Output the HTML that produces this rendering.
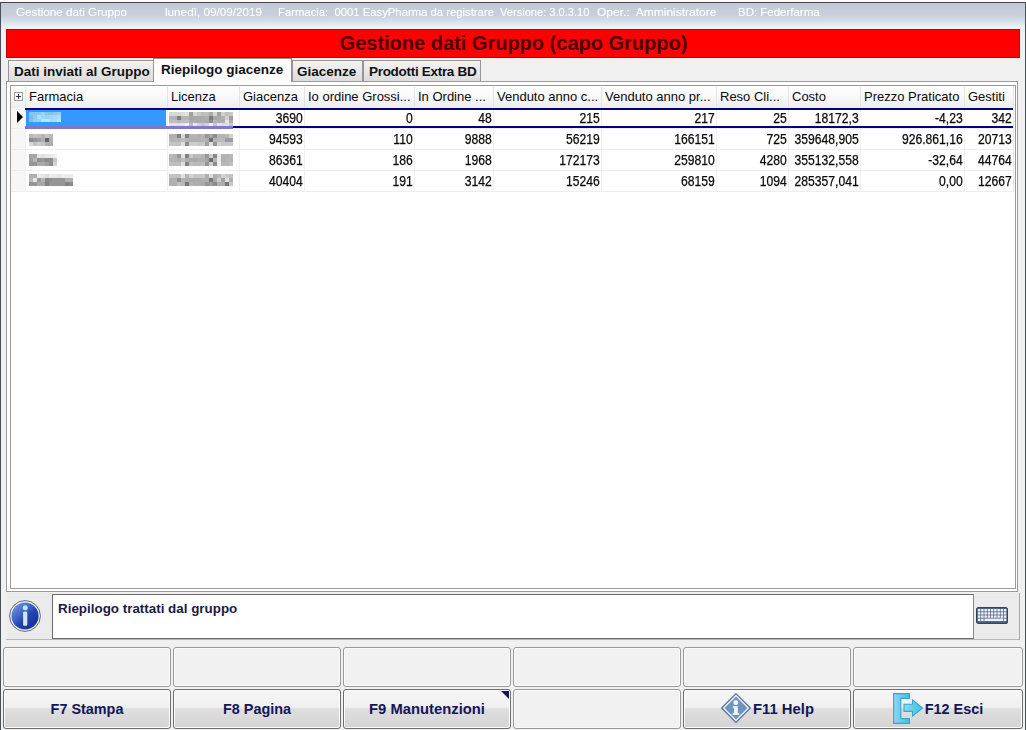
<!DOCTYPE html>
<html><head><meta charset="utf-8">
<style>
*{margin:0;padding:0;box-sizing:border-box}
html,body{width:1026px;height:730px;overflow:hidden;background:#f0f0f0;font-family:"Liberation Sans",sans-serif}
.a{position:absolute}
#win{position:absolute;left:0;top:0;width:1026px;height:730px;background:#f0f0f0}
#title{left:1px;top:3px;width:1024px;height:26px;background:linear-gradient(#c3cad6 0px,#c6cfdb 12px,#d2dbe7 17px,#dfe8ec 21px,#f1f0f3 24px,#fbe9ec 26px)}
.tt{position:absolute;top:5.6px;color:#fcfdff;font-size:11.5px;white-space:nowrap;transform-origin:0 0;text-shadow:0 0 1px rgba(255,255,255,.6)}
#banner{left:6px;top:29px;width:1014px;height:29px;background:#fe0000;border:1px solid #c80000}
#banner span{position:absolute;left:332.6px;top:1.6px;font-weight:bold;font-size:20px;color:#4a0000;white-space:nowrap}
.tab{position:absolute;height:21px;border:1px solid #959595;border-bottom:none;background:linear-gradient(#f3f3f3,#dcdcdc);font-weight:bold;font-size:13.5px;color:#111;white-space:nowrap;padding-left:5px;line-height:22px}
.hc{position:absolute;top:86.4px;height:22px;line-height:22px;font-size:13px;color:#0a0a0a;padding-left:4px;white-space:nowrap}
.hs{position:absolute;top:87px;width:1px;height:20px;background:#e4e4e4}
.dc{position:absolute;height:21px;line-height:21px;font-size:13.8px;color:#050505;text-align:right;padding-right:1.5px;white-space:nowrap;-webkit-text-stroke:0.25px #111;transform:scaleX(0.88);transform-origin:100% 50%}
.btn{position:absolute;width:168px;height:40px;border:1px solid #999;border-radius:3px;background:#f1f1f1;box-shadow:inset 1px 1px 0 #fbfbfb,inset -1px -1px 0 #fbfbfb}
.be{border-color:#6f6f6f;background:linear-gradient(#f6f6f6 0%,#f0f0f0 45%,#dedede 50%,#d4d4d4 100%)}
.bt{position:absolute;left:0;top:0;width:100%;height:100%;line-height:39px;text-align:center;font-weight:bold;font-size:14.4px;color:#15155a;white-space:nowrap}
</style></head><body>
<div id="win">
<div class="a" style="left:0;top:0;width:1026px;height:2px;background:#fbfbfb"></div>
<div class="a" style="left:0;top:2px;width:1026px;height:1px;background:#3f464d"></div>
<div id="title" class="a"></div>
<div class="tt" style="left:16px;transform:scaleX(1.016)">Gestione dati Gruppo</div>
<div class="tt" style="left:165px;transform:scaleX(1.018)">lunedì, 09/09/2019</div>
<div class="tt" style="left:278px;transform:scaleX(0.982)">Farmacia:&nbsp; 0001 EasyPharma da registrare</div>
<div class="tt" style="left:500px;transform:scaleX(0.965)">Versione: 3.0.3.10</div>
<div class="tt" style="left:597px;transform:scaleX(1.044)">Oper.:&nbsp; Amministratore</div>
<div class="tt" style="left:738px;transform:scaleX(0.998)">BD: Federfarma</div>
<div class="a" style="left:0;top:2px;width:1px;height:728px;background:#4a5058"></div>
<div class="a" style="left:1025px;top:2px;width:1px;height:728px;background:#4a5058"></div>
<div id="banner" class="a"><span>Gestione dati Gruppo (capo Gruppo)</span></div>

<div class="a" style="left:6px;top:81px;width:1012px;height:511px;border:1px solid #9a9a9a;background:#fff"></div>
<div class="tab" style="left:8px;top:60px;width:146px">Dati inviati al Gruppo</div>
<div class="tab" style="left:153px;top:58px;width:139px;height:24px;background:#fcfcfc;padding-left:7px;line-height:21.5px">Riepilogo giacenze</div>
<div class="tab" style="left:292px;top:60px;width:71px;padding-left:4px">Giacenze</div>
<div class="tab" style="left:363px;top:60px;width:118px;letter-spacing:-0.3px">Prodotti Extra BD</div>
<div class="a" style="left:10px;top:85px;width:1006px;height:504px;border:1px solid #9a9a9a;background:#fff"></div>
<div class="a" style="left:11px;top:86px;width:1002px;height:22px;background:linear-gradient(#ffffff,#f8f8f8 50%,#eeeeee)"></div>
<div class="hc" style="left:25px;width:142px">Farmacia</div>
<div class="hs" style="left:25px"></div>
<div class="hc" style="left:167px;width:72px">Licenza</div>
<div class="hs" style="left:167px"></div>
<div class="hc" style="left:239px;width:65px">Giacenza</div>
<div class="hs" style="left:239px"></div>
<div class="hc" style="left:304px;width:110px">Io ordine Grossi...</div>
<div class="hs" style="left:304px"></div>
<div class="hc" style="left:414px;width:79px">In Ordine ...</div>
<div class="hs" style="left:414px"></div>
<div class="hc" style="left:493px;width:108px">Venduto anno c...</div>
<div class="hs" style="left:493px"></div>
<div class="hc" style="left:601px;width:115px">Venduto anno pr...</div>
<div class="hs" style="left:601px"></div>
<div class="hc" style="left:716px;width:72px">Reso Cli...</div>
<div class="hs" style="left:716px"></div>
<div class="hc" style="left:788px;width:72px">Costo</div>
<div class="hs" style="left:788px"></div>
<div class="hc" style="left:860px;width:104px">Prezzo Praticato</div>
<div class="hs" style="left:860px"></div>
<div class="hc" style="left:964px;width:49px">Gestiti</div>
<div class="hs" style="left:964px"></div>
<div class="a" style="left:14px;top:92px;width:9px;height:9px;border:1px solid #a0a0a0;background:#f8f8f8"></div>
<div class="a" style="left:16px;top:96px;width:5px;height:1px;background:#334"></div>
<div class="a" style="left:18px;top:94px;width:1px;height:5px;background:#334"></div>
<div class="a" style="left:11px;top:108px;width:14px;height:84px;background:#f7f7f7"></div>
<div class="a" style="left:11px;top:128px;width:1002px;height:1px;background:#ededed"></div>
<div class="dc" style="top:108px;left:199px;width:105px">3690</div>
<div class="dc" style="top:108px;left:264px;width:150px">0</div>
<div class="dc" style="top:108px;left:374px;width:119px">48</div>
<div class="dc" style="top:108px;left:453px;width:148px">215</div>
<div class="dc" style="top:108px;left:561px;width:155px">217</div>
<div class="dc" style="top:108px;left:676px;width:112px">25</div>
<div class="dc" style="top:108px;left:748px;width:112px">18172,3</div>
<div class="dc" style="top:108px;left:820px;width:144px">-4,23</div>
<div class="dc" style="top:108px;left:924px;width:89px">342</div>
<div class="a" style="left:11px;top:149px;width:1002px;height:1px;background:#ededed"></div>
<div class="dc" style="top:129px;left:199px;width:105px">94593</div>
<div class="dc" style="top:129px;left:264px;width:150px">110</div>
<div class="dc" style="top:129px;left:374px;width:119px">9888</div>
<div class="dc" style="top:129px;left:453px;width:148px">56219</div>
<div class="dc" style="top:129px;left:561px;width:155px">166151</div>
<div class="dc" style="top:129px;left:676px;width:112px">725</div>
<div class="dc" style="top:129px;left:748px;width:112px">359648,905</div>
<div class="dc" style="top:129px;left:820px;width:144px">926.861,16</div>
<div class="dc" style="top:129px;left:924px;width:89px">20713</div>
<div class="a" style="left:11px;top:170px;width:1002px;height:1px;background:#ededed"></div>
<div class="dc" style="top:150px;left:199px;width:105px">86361</div>
<div class="dc" style="top:150px;left:264px;width:150px">186</div>
<div class="dc" style="top:150px;left:374px;width:119px">1968</div>
<div class="dc" style="top:150px;left:453px;width:148px">172173</div>
<div class="dc" style="top:150px;left:561px;width:155px">259810</div>
<div class="dc" style="top:150px;left:676px;width:112px">4280</div>
<div class="dc" style="top:150px;left:748px;width:112px">355132,558</div>
<div class="dc" style="top:150px;left:820px;width:144px">-32,64</div>
<div class="dc" style="top:150px;left:924px;width:89px">44764</div>
<div class="a" style="left:11px;top:191px;width:1002px;height:1px;background:#ededed"></div>
<div class="dc" style="top:171px;left:199px;width:105px">40404</div>
<div class="dc" style="top:171px;left:264px;width:150px">191</div>
<div class="dc" style="top:171px;left:374px;width:119px">3142</div>
<div class="dc" style="top:171px;left:453px;width:148px">15246</div>
<div class="dc" style="top:171px;left:561px;width:155px">68159</div>
<div class="dc" style="top:171px;left:676px;width:112px">1094</div>
<div class="dc" style="top:171px;left:748px;width:112px">285357,041</div>
<div class="dc" style="top:171px;left:820px;width:144px">0,00</div>
<div class="dc" style="top:171px;left:924px;width:89px">12667</div>
<div class="a" style="left:25px;top:108px;width:1px;height:84px;background:#f0f0f0"></div>
<div class="a" style="left:167px;top:108px;width:1px;height:84px;background:#f0f0f0"></div>
<div class="a" style="left:239px;top:108px;width:1px;height:84px;background:#f0f0f0"></div>
<div class="a" style="left:304px;top:108px;width:1px;height:84px;background:#f0f0f0"></div>
<div class="a" style="left:414px;top:108px;width:1px;height:84px;background:#f0f0f0"></div>
<div class="a" style="left:493px;top:108px;width:1px;height:84px;background:#f0f0f0"></div>
<div class="a" style="left:601px;top:108px;width:1px;height:84px;background:#f0f0f0"></div>
<div class="a" style="left:716px;top:108px;width:1px;height:84px;background:#f0f0f0"></div>
<div class="a" style="left:788px;top:108px;width:1px;height:84px;background:#f0f0f0"></div>
<div class="a" style="left:860px;top:108px;width:1px;height:84px;background:#f0f0f0"></div>
<div class="a" style="left:964px;top:108px;width:1px;height:84px;background:#f0f0f0"></div>
<div class="a" style="left:1013px;top:86px;width:1px;height:106px;background:#e6e6e6"></div>
<div class="a" style="left:26px;top:110px;width:140px;height:16px;background:#3399ff"></div>
<div class="a" style="left:25px;top:108px;width:988px;height:2px;background:#000080"></div>
<div class="a" style="left:233px;top:126px;width:780px;height:2px;background:#000080"></div>
<div class="a" style="left:25px;top:126px;width:208px;height:3px;background:#7a7ac8"></div>
<div class="a" style="left:17px;top:111px;width:0;height:0;border-top:6px solid transparent;border-bottom:6px solid transparent;border-left:6px solid #000"></div>
<svg class="a" style="left:169px;top:112px;filter:blur(0.45px)" width="64" height="14"><rect x="0" y="0" width="4" height="4" fill="rgb(215,215,215)"/><rect x="4" y="0" width="4" height="4" fill="rgb(215,215,215)"/><rect x="8" y="0" width="4" height="4" fill="rgb(215,215,215)"/><rect x="12" y="0" width="4" height="4" fill="rgb(220,220,220)"/><rect x="16" y="0" width="4" height="4" fill="rgb(225,225,225)"/><rect x="20" y="0" width="4" height="4" fill="rgb(160,160,160)"/><rect x="24" y="0" width="4" height="4" fill="rgb(215,215,215)"/><rect x="28" y="0" width="4" height="4" fill="rgb(200,200,200)"/><rect x="32" y="0" width="4" height="4" fill="rgb(190,190,190)"/><rect x="36" y="0" width="4" height="4" fill="rgb(190,190,190)"/><rect x="40" y="0" width="4" height="4" fill="rgb(170,170,170)"/><rect x="44" y="0" width="4" height="4" fill="rgb(215,215,215)"/><rect x="48" y="0" width="4" height="4" fill="rgb(160,160,160)"/><rect x="52" y="0" width="4" height="4" fill="rgb(210,210,210)"/><rect x="56" y="0" width="4" height="4" fill="rgb(190,190,190)"/><rect x="60" y="0" width="4" height="4" fill="rgb(200,200,200)"/><rect x="0" y="4" width="4" height="4" fill="rgb(180,180,180)"/><rect x="4" y="4" width="4" height="4" fill="rgb(180,180,180)"/><rect x="8" y="4" width="4" height="4" fill="rgb(125,125,125)"/><rect x="12" y="4" width="4" height="4" fill="rgb(180,180,180)"/><rect x="16" y="4" width="4" height="4" fill="rgb(180,180,180)"/><rect x="20" y="4" width="4" height="4" fill="rgb(165,165,165)"/><rect x="24" y="4" width="4" height="4" fill="rgb(170,170,170)"/><rect x="28" y="4" width="4" height="4" fill="rgb(170,170,170)"/><rect x="32" y="4" width="4" height="4" fill="rgb(170,170,170)"/><rect x="36" y="4" width="4" height="4" fill="rgb(175,175,175)"/><rect x="40" y="4" width="4" height="4" fill="rgb(125,125,125)"/><rect x="44" y="4" width="4" height="4" fill="rgb(170,170,170)"/><rect x="48" y="4" width="4" height="4" fill="rgb(170,170,170)"/><rect x="52" y="4" width="4" height="4" fill="rgb(175,175,175)"/><rect x="56" y="4" width="4" height="4" fill="rgb(210,210,210)"/><rect x="60" y="4" width="4" height="4" fill="rgb(160,160,160)"/><rect x="0" y="8" width="4" height="3" fill="rgb(190,190,190)"/><rect x="4" y="8" width="4" height="3" fill="rgb(190,190,190)"/><rect x="8" y="8" width="4" height="3" fill="rgb(185,185,185)"/><rect x="12" y="8" width="4" height="3" fill="rgb(190,190,190)"/><rect x="16" y="8" width="4" height="3" fill="rgb(190,190,190)"/><rect x="20" y="8" width="4" height="3" fill="rgb(170,170,170)"/><rect x="24" y="8" width="4" height="3" fill="rgb(175,175,175)"/><rect x="28" y="8" width="4" height="3" fill="rgb(170,170,170)"/><rect x="32" y="8" width="4" height="3" fill="rgb(175,175,175)"/><rect x="36" y="8" width="4" height="3" fill="rgb(170,170,170)"/><rect x="40" y="8" width="4" height="3" fill="rgb(140,140,140)"/><rect x="44" y="8" width="4" height="3" fill="rgb(180,180,180)"/><rect x="48" y="8" width="4" height="3" fill="rgb(175,175,175)"/><rect x="52" y="8" width="4" height="3" fill="rgb(175,175,175)"/><rect x="56" y="8" width="4" height="3" fill="rgb(230,230,230)"/><rect x="60" y="8" width="4" height="3" fill="rgb(175,175,175)"/><rect x="0" y="11" width="4" height="3" fill="rgb(225,225,225)"/><rect x="4" y="11" width="4" height="3" fill="rgb(225,225,225)"/><rect x="8" y="11" width="4" height="3" fill="rgb(225,225,225)"/><rect x="12" y="11" width="4" height="3" fill="rgb(230,230,230)"/><rect x="16" y="11" width="4" height="3" fill="rgb(240,240,240)"/><rect x="20" y="11" width="4" height="3" fill="rgb(190,190,190)"/><rect x="24" y="11" width="4" height="3" fill="rgb(230,230,230)"/><rect x="28" y="11" width="4" height="3" fill="rgb(210,210,210)"/><rect x="32" y="11" width="4" height="3" fill="rgb(200,200,200)"/><rect x="36" y="11" width="4" height="3" fill="rgb(210,210,210)"/><rect x="40" y="11" width="4" height="3" fill="rgb(240,240,240)"/><rect x="44" y="11" width="4" height="3" fill="rgb(200,200,200)"/><rect x="48" y="11" width="4" height="3" fill="rgb(230,230,230)"/><rect x="52" y="11" width="4" height="3" fill="rgb(220,220,220)"/><rect x="56" y="11" width="4" height="3" fill="rgb(225,225,225)"/><rect x="60" y="11" width="4" height="3" fill="rgb(200,200,200)"/></svg>
<svg class="a" style="left:169px;top:134px;filter:blur(0.45px)" width="64" height="12"><rect x="0" y="0" width="4" height="4" fill="rgb(175,175,175)"/><rect x="4" y="0" width="4" height="4" fill="rgb(175,175,175)"/><rect x="8" y="0" width="4" height="4" fill="rgb(130,130,130)"/><rect x="12" y="0" width="4" height="4" fill="rgb(215,215,215)"/><rect x="16" y="0" width="4" height="4" fill="rgb(130,130,130)"/><rect x="20" y="0" width="4" height="4" fill="rgb(180,180,180)"/><rect x="24" y="0" width="4" height="4" fill="rgb(180,180,180)"/><rect x="28" y="0" width="4" height="4" fill="rgb(175,175,175)"/><rect x="32" y="0" width="4" height="4" fill="rgb(180,180,180)"/><rect x="36" y="0" width="4" height="4" fill="rgb(150,150,150)"/><rect x="40" y="0" width="4" height="4" fill="rgb(165,165,165)"/><rect x="44" y="0" width="4" height="4" fill="rgb(140,140,140)"/><rect x="48" y="0" width="4" height="4" fill="rgb(180,180,180)"/><rect x="52" y="0" width="4" height="4" fill="rgb(180,180,180)"/><rect x="56" y="0" width="4" height="4" fill="rgb(185,185,185)"/><rect x="60" y="0" width="4" height="4" fill="rgb(210,210,210)"/><rect x="0" y="4" width="4" height="4" fill="rgb(180,180,180)"/><rect x="4" y="4" width="4" height="4" fill="rgb(180,180,180)"/><rect x="8" y="4" width="4" height="4" fill="rgb(180,180,180)"/><rect x="12" y="4" width="4" height="4" fill="rgb(190,190,190)"/><rect x="16" y="4" width="4" height="4" fill="rgb(180,180,180)"/><rect x="20" y="4" width="4" height="4" fill="rgb(175,175,175)"/><rect x="24" y="4" width="4" height="4" fill="rgb(175,175,175)"/><rect x="28" y="4" width="4" height="4" fill="rgb(175,175,175)"/><rect x="32" y="4" width="4" height="4" fill="rgb(180,180,180)"/><rect x="36" y="4" width="4" height="4" fill="rgb(175,175,175)"/><rect x="40" y="4" width="4" height="4" fill="rgb(110,110,110)"/><rect x="44" y="4" width="4" height="4" fill="rgb(180,180,180)"/><rect x="48" y="4" width="4" height="4" fill="rgb(185,185,185)"/><rect x="52" y="4" width="4" height="4" fill="rgb(185,185,185)"/><rect x="56" y="4" width="4" height="4" fill="rgb(155,155,155)"/><rect x="60" y="4" width="4" height="4" fill="rgb(155,155,155)"/><rect x="0" y="8" width="4" height="4" fill="rgb(195,195,195)"/><rect x="4" y="8" width="4" height="4" fill="rgb(195,195,195)"/><rect x="8" y="8" width="4" height="4" fill="rgb(195,195,195)"/><rect x="12" y="8" width="4" height="4" fill="rgb(225,225,225)"/><rect x="16" y="8" width="4" height="4" fill="rgb(140,140,140)"/><rect x="20" y="8" width="4" height="4" fill="rgb(205,205,205)"/><rect x="24" y="8" width="4" height="4" fill="rgb(205,205,205)"/><rect x="28" y="8" width="4" height="4" fill="rgb(200,200,200)"/><rect x="32" y="8" width="4" height="4" fill="rgb(200,200,200)"/><rect x="36" y="8" width="4" height="4" fill="rgb(160,160,160)"/><rect x="40" y="8" width="4" height="4" fill="rgb(225,225,225)"/><rect x="44" y="8" width="4" height="4" fill="rgb(150,150,150)"/><rect x="48" y="8" width="4" height="4" fill="rgb(210,210,210)"/><rect x="52" y="8" width="4" height="4" fill="rgb(200,200,200)"/><rect x="56" y="8" width="4" height="4" fill="rgb(200,200,200)"/><rect x="60" y="8" width="4" height="4" fill="rgb(200,200,200)"/></svg>
<svg class="a" style="left:169px;top:154px;filter:blur(0.45px)" width="64" height="12"><rect x="0" y="0" width="4" height="4" fill="rgb(185,185,185)"/><rect x="4" y="0" width="4" height="4" fill="rgb(180,180,180)"/><rect x="8" y="0" width="4" height="4" fill="rgb(150,150,150)"/><rect x="12" y="0" width="4" height="4" fill="rgb(225,225,225)"/><rect x="16" y="0" width="4" height="4" fill="rgb(130,130,130)"/><rect x="20" y="0" width="4" height="4" fill="rgb(200,200,200)"/><rect x="24" y="0" width="4" height="4" fill="rgb(185,185,185)"/><rect x="28" y="0" width="4" height="4" fill="rgb(185,185,185)"/><rect x="32" y="0" width="4" height="4" fill="rgb(180,180,180)"/><rect x="36" y="0" width="4" height="4" fill="rgb(150,150,150)"/><rect x="40" y="0" width="4" height="4" fill="rgb(205,205,205)"/><rect x="44" y="0" width="4" height="4" fill="rgb(135,135,135)"/><rect x="48" y="0" width="4" height="4" fill="rgb(230,230,230)"/><rect x="52" y="0" width="4" height="4" fill="rgb(180,180,180)"/><rect x="56" y="0" width="4" height="4" fill="rgb(180,180,180)"/><rect x="60" y="0" width="4" height="4" fill="rgb(185,185,185)"/><rect x="0" y="4" width="4" height="4" fill="rgb(180,180,180)"/><rect x="4" y="4" width="4" height="4" fill="rgb(180,180,180)"/><rect x="8" y="4" width="4" height="4" fill="rgb(175,175,175)"/><rect x="12" y="4" width="4" height="4" fill="rgb(190,190,190)"/><rect x="16" y="4" width="4" height="4" fill="rgb(175,175,175)"/><rect x="20" y="4" width="4" height="4" fill="rgb(170,170,170)"/><rect x="24" y="4" width="4" height="4" fill="rgb(170,170,170)"/><rect x="28" y="4" width="4" height="4" fill="rgb(175,175,175)"/><rect x="32" y="4" width="4" height="4" fill="rgb(175,175,175)"/><rect x="36" y="4" width="4" height="4" fill="rgb(165,165,165)"/><rect x="40" y="4" width="4" height="4" fill="rgb(110,110,110)"/><rect x="44" y="4" width="4" height="4" fill="rgb(180,180,180)"/><rect x="48" y="4" width="4" height="4" fill="rgb(235,235,235)"/><rect x="52" y="4" width="4" height="4" fill="rgb(175,175,175)"/><rect x="56" y="4" width="4" height="4" fill="rgb(180,180,180)"/><rect x="60" y="4" width="4" height="4" fill="rgb(180,180,180)"/><rect x="0" y="8" width="4" height="4" fill="rgb(190,190,190)"/><rect x="4" y="8" width="4" height="4" fill="rgb(190,190,190)"/><rect x="8" y="8" width="4" height="4" fill="rgb(190,190,190)"/><rect x="12" y="8" width="4" height="4" fill="rgb(220,220,220)"/><rect x="16" y="8" width="4" height="4" fill="rgb(130,130,130)"/><rect x="20" y="8" width="4" height="4" fill="rgb(190,190,190)"/><rect x="24" y="8" width="4" height="4" fill="rgb(185,185,185)"/><rect x="28" y="8" width="4" height="4" fill="rgb(185,185,185)"/><rect x="32" y="8" width="4" height="4" fill="rgb(190,190,190)"/><rect x="36" y="8" width="4" height="4" fill="rgb(150,150,150)"/><rect x="40" y="8" width="4" height="4" fill="rgb(205,205,205)"/><rect x="44" y="8" width="4" height="4" fill="rgb(140,140,140)"/><rect x="48" y="8" width="4" height="4" fill="rgb(235,235,235)"/><rect x="52" y="8" width="4" height="4" fill="rgb(185,185,185)"/><rect x="56" y="8" width="4" height="4" fill="rgb(185,185,185)"/><rect x="60" y="8" width="4" height="4" fill="rgb(190,190,190)"/></svg>
<svg class="a" style="left:169px;top:174px;filter:blur(0.45px)" width="64" height="12"><rect x="0" y="0" width="4" height="4" fill="rgb(195,195,195)"/><rect x="4" y="0" width="4" height="4" fill="rgb(195,195,195)"/><rect x="8" y="0" width="4" height="4" fill="rgb(195,195,195)"/><rect x="12" y="0" width="4" height="4" fill="rgb(225,225,225)"/><rect x="16" y="0" width="4" height="4" fill="rgb(180,180,180)"/><rect x="20" y="0" width="4" height="4" fill="rgb(210,210,210)"/><rect x="24" y="0" width="4" height="4" fill="rgb(200,200,200)"/><rect x="28" y="0" width="4" height="4" fill="rgb(200,200,200)"/><rect x="32" y="0" width="4" height="4" fill="rgb(200,200,200)"/><rect x="36" y="0" width="4" height="4" fill="rgb(175,175,175)"/><rect x="40" y="0" width="4" height="4" fill="rgb(220,220,220)"/><rect x="44" y="0" width="4" height="4" fill="rgb(175,175,175)"/><rect x="48" y="0" width="4" height="4" fill="rgb(185,185,185)"/><rect x="52" y="0" width="4" height="4" fill="rgb(210,210,210)"/><rect x="56" y="0" width="4" height="4" fill="rgb(200,200,200)"/><rect x="60" y="0" width="4" height="4" fill="rgb(195,195,195)"/><rect x="0" y="4" width="4" height="4" fill="rgb(175,175,175)"/><rect x="4" y="4" width="4" height="4" fill="rgb(175,175,175)"/><rect x="8" y="4" width="4" height="4" fill="rgb(145,145,145)"/><rect x="12" y="4" width="4" height="4" fill="rgb(180,180,180)"/><rect x="16" y="4" width="4" height="4" fill="rgb(175,175,175)"/><rect x="20" y="4" width="4" height="4" fill="rgb(170,170,170)"/><rect x="24" y="4" width="4" height="4" fill="rgb(170,170,170)"/><rect x="28" y="4" width="4" height="4" fill="rgb(170,170,170)"/><rect x="32" y="4" width="4" height="4" fill="rgb(175,175,175)"/><rect x="36" y="4" width="4" height="4" fill="rgb(175,175,175)"/><rect x="40" y="4" width="4" height="4" fill="rgb(120,120,120)"/><rect x="44" y="4" width="4" height="4" fill="rgb(170,170,170)"/><rect x="48" y="4" width="4" height="4" fill="rgb(205,205,205)"/><rect x="52" y="4" width="4" height="4" fill="rgb(160,160,160)"/><rect x="56" y="4" width="4" height="4" fill="rgb(225,225,225)"/><rect x="60" y="4" width="4" height="4" fill="rgb(175,175,175)"/><rect x="0" y="8" width="4" height="4" fill="rgb(175,175,175)"/><rect x="4" y="8" width="4" height="4" fill="rgb(175,175,175)"/><rect x="8" y="8" width="4" height="4" fill="rgb(190,190,190)"/><rect x="12" y="8" width="4" height="4" fill="rgb(185,185,185)"/><rect x="16" y="8" width="4" height="4" fill="rgb(120,120,120)"/><rect x="20" y="8" width="4" height="4" fill="rgb(180,180,180)"/><rect x="24" y="8" width="4" height="4" fill="rgb(175,175,175)"/><rect x="28" y="8" width="4" height="4" fill="rgb(175,175,175)"/><rect x="32" y="8" width="4" height="4" fill="rgb(170,170,170)"/><rect x="36" y="8" width="4" height="4" fill="rgb(150,150,150)"/><rect x="40" y="8" width="4" height="4" fill="rgb(160,160,160)"/><rect x="44" y="8" width="4" height="4" fill="rgb(140,140,140)"/><rect x="48" y="8" width="4" height="4" fill="rgb(175,175,175)"/><rect x="52" y="8" width="4" height="4" fill="rgb(175,175,175)"/><rect x="56" y="8" width="4" height="4" fill="rgb(120,120,120)"/><rect x="60" y="8" width="4" height="4" fill="rgb(200,200,200)"/></svg>
<svg class="a" style="left:29px;top:112px;filter:blur(0.45px)" width="32" height="10"><rect x="0" y="0" width="4" height="3" fill="rgb(135,195,235)"/><rect x="4" y="0" width="4" height="3" fill="rgb(135,195,235)"/><rect x="8" y="0" width="4" height="3" fill="rgb(140,200,240)"/><rect x="12" y="0" width="4" height="3" fill="rgb(150,210,250)"/><rect x="16" y="0" width="4" height="3" fill="rgb(135,195,235)"/><rect x="20" y="0" width="4" height="3" fill="rgb(135,195,235)"/><rect x="24" y="0" width="4" height="3" fill="rgb(140,200,240)"/><rect x="28" y="0" width="4" height="3" fill="rgb(145,205,245)"/><rect x="0" y="3" width="4" height="4" fill="rgb(125,185,225)"/><rect x="4" y="3" width="4" height="4" fill="rgb(140,200,240)"/><rect x="8" y="3" width="4" height="4" fill="rgb(165,225,255)"/><rect x="12" y="3" width="4" height="4" fill="rgb(155,215,255)"/><rect x="16" y="3" width="4" height="4" fill="rgb(150,210,250)"/><rect x="20" y="3" width="4" height="4" fill="rgb(155,215,255)"/><rect x="24" y="3" width="4" height="4" fill="rgb(160,220,255)"/><rect x="28" y="3" width="4" height="4" fill="rgb(165,225,255)"/><rect x="0" y="7" width="4" height="3" fill="rgb(135,195,235)"/><rect x="4" y="7" width="4" height="3" fill="rgb(145,205,245)"/><rect x="8" y="7" width="4" height="3" fill="rgb(150,210,250)"/><rect x="12" y="7" width="4" height="3" fill="rgb(170,230,255)"/><rect x="16" y="7" width="4" height="3" fill="rgb(175,235,255)"/><rect x="20" y="7" width="4" height="3" fill="rgb(165,225,255)"/><rect x="24" y="7" width="4" height="3" fill="rgb(165,225,255)"/><rect x="28" y="7" width="4" height="3" fill="rgb(175,235,255)"/></svg>
<svg class="a" style="left:29px;top:134px;filter:blur(0.45px)" width="24" height="12"><rect x="0" y="0" width="4" height="4" fill="rgb(185,185,185)"/><rect x="4" y="0" width="4" height="4" fill="rgb(195,195,195)"/><rect x="8" y="0" width="4" height="4" fill="rgb(190,190,190)"/><rect x="12" y="0" width="4" height="4" fill="rgb(180,180,180)"/><rect x="16" y="0" width="4" height="4" fill="rgb(195,195,195)"/><rect x="20" y="0" width="4" height="4" fill="rgb(185,185,185)"/><rect x="0" y="4" width="4" height="4" fill="rgb(140,140,140)"/><rect x="4" y="4" width="4" height="4" fill="rgb(150,150,150)"/><rect x="8" y="4" width="4" height="4" fill="rgb(160,160,160)"/><rect x="12" y="4" width="4" height="4" fill="rgb(175,175,175)"/><rect x="16" y="4" width="4" height="4" fill="rgb(100,100,100)"/><rect x="20" y="4" width="4" height="4" fill="rgb(175,175,175)"/><rect x="0" y="8" width="4" height="4" fill="rgb(215,215,215)"/><rect x="4" y="8" width="4" height="4" fill="rgb(195,195,195)"/><rect x="8" y="8" width="4" height="4" fill="rgb(205,205,205)"/><rect x="12" y="8" width="4" height="4" fill="rgb(195,195,195)"/><rect x="16" y="8" width="4" height="4" fill="rgb(175,175,175)"/><rect x="20" y="8" width="4" height="4" fill="rgb(175,175,175)"/></svg>
<svg class="a" style="left:29px;top:154px;filter:blur(0.45px)" width="28" height="12"><rect x="0" y="0" width="4" height="4" fill="rgb(165,165,165)"/><rect x="4" y="0" width="4" height="4" fill="rgb(165,165,165)"/><rect x="8" y="0" width="4" height="4" fill="rgb(230,230,230)"/><rect x="12" y="0" width="4" height="4" fill="rgb(225,225,225)"/><rect x="16" y="0" width="4" height="4" fill="rgb(230,230,230)"/><rect x="20" y="0" width="4" height="4" fill="rgb(235,235,235)"/><rect x="24" y="0" width="4" height="4" fill="rgb(240,240,240)"/><rect x="0" y="4" width="4" height="4" fill="rgb(160,160,160)"/><rect x="4" y="4" width="4" height="4" fill="rgb(180,180,180)"/><rect x="8" y="4" width="4" height="4" fill="rgb(145,145,145)"/><rect x="12" y="4" width="4" height="4" fill="rgb(150,150,150)"/><rect x="16" y="4" width="4" height="4" fill="rgb(140,140,140)"/><rect x="20" y="4" width="4" height="4" fill="rgb(145,145,145)"/><rect x="24" y="4" width="4" height="4" fill="rgb(200,200,200)"/><rect x="0" y="8" width="4" height="4" fill="rgb(150,150,150)"/><rect x="4" y="8" width="4" height="4" fill="rgb(150,150,150)"/><rect x="8" y="8" width="4" height="4" fill="rgb(170,170,170)"/><rect x="12" y="8" width="4" height="4" fill="rgb(170,170,170)"/><rect x="16" y="8" width="4" height="4" fill="rgb(160,160,160)"/><rect x="20" y="8" width="4" height="4" fill="rgb(140,140,140)"/><rect x="24" y="8" width="4" height="4" fill="rgb(210,210,210)"/></svg>
<svg class="a" style="left:29px;top:174px;filter:blur(0.45px)" width="44" height="12"><rect x="0" y="0" width="4" height="4" fill="rgb(175,175,175)"/><rect x="4" y="0" width="4" height="4" fill="rgb(175,175,175)"/><rect x="8" y="0" width="4" height="4" fill="rgb(235,235,235)"/><rect x="12" y="0" width="4" height="4" fill="rgb(230,230,230)"/><rect x="16" y="0" width="4" height="4" fill="rgb(220,220,220)"/><rect x="20" y="0" width="4" height="4" fill="rgb(235,235,235)"/><rect x="24" y="0" width="4" height="4" fill="rgb(235,235,235)"/><rect x="28" y="0" width="4" height="4" fill="rgb(230,230,230)"/><rect x="32" y="0" width="4" height="4" fill="rgb(235,235,235)"/><rect x="36" y="0" width="4" height="4" fill="rgb(235,235,235)"/><rect x="40" y="0" width="4" height="4" fill="rgb(235,235,235)"/><rect x="0" y="4" width="4" height="4" fill="rgb(185,185,185)"/><rect x="4" y="4" width="4" height="4" fill="rgb(230,230,230)"/><rect x="8" y="4" width="4" height="4" fill="rgb(155,155,155)"/><rect x="12" y="4" width="4" height="4" fill="rgb(180,180,180)"/><rect x="16" y="4" width="4" height="4" fill="rgb(135,135,135)"/><rect x="20" y="4" width="4" height="4" fill="rgb(145,145,145)"/><rect x="24" y="4" width="4" height="4" fill="rgb(150,150,150)"/><rect x="28" y="4" width="4" height="4" fill="rgb(150,150,150)"/><rect x="32" y="4" width="4" height="4" fill="rgb(150,150,150)"/><rect x="36" y="4" width="4" height="4" fill="rgb(175,175,175)"/><rect x="40" y="4" width="4" height="4" fill="rgb(175,175,175)"/><rect x="0" y="8" width="4" height="4" fill="rgb(150,150,150)"/><rect x="4" y="8" width="4" height="4" fill="rgb(150,150,150)"/><rect x="8" y="8" width="4" height="4" fill="rgb(170,170,170)"/><rect x="12" y="8" width="4" height="4" fill="rgb(165,165,165)"/><rect x="16" y="8" width="4" height="4" fill="rgb(130,130,130)"/><rect x="20" y="8" width="4" height="4" fill="rgb(150,150,150)"/><rect x="24" y="8" width="4" height="4" fill="rgb(150,150,150)"/><rect x="28" y="8" width="4" height="4" fill="rgb(150,150,150)"/><rect x="32" y="8" width="4" height="4" fill="rgb(150,150,150)"/><rect x="36" y="8" width="4" height="4" fill="rgb(130,130,130)"/><rect x="40" y="8" width="4" height="4" fill="rgb(140,140,140)"/></svg><!-- status -->
<div class="a" style="left:7px;top:593px;width:45px;height:46px;background:#ebebeb"></div>
<svg class="a" style="left:8px;top:599px" width="34" height="34" viewBox="0 0 34 34">
<defs><linearGradient id="ig" x1="0.15" y1="0.1" x2="0.85" y2="0.9"><stop offset="0" stop-color="#6a90e0"/><stop offset="0.45" stop-color="#3358c0"/><stop offset="0.55" stop-color="#2447b0"/><stop offset="1" stop-color="#1a2f98"/></linearGradient></defs>
<circle cx="17" cy="17" r="15.4" fill="#f4f6fa" stroke="#5d6576" stroke-width="1"/>
<circle cx="17" cy="17" r="13.6" fill="url(#ig)"/>
<circle cx="17.2" cy="8.8" r="2.5" fill="#bfe6f8"/>
<rect x="15.1" y="12.6" width="4.2" height="14.2" rx="1.4" fill="#d2e6f6"/>
</svg>
<div class="a" style="left:52px;top:594px;width:922px;height:45px;background:#fff;border:1px solid #6a6a6a;border-right-color:#8a8a8a"></div>
<div class="a" style="left:58px;top:601px;font-weight:bold;font-size:13.4px;color:#1a1a48;white-space:nowrap">Riepilogo trattati dal gruppo</div>
<div class="a" style="left:974px;top:593px;width:46px;height:47px;background:#ebebeb;border-right:1px solid #a8a8a8;border-bottom:1px solid #b0b0b0"></div>
<svg class="a" style="left:976px;top:607px" width="32" height="17" viewBox="0 0 32 17">
<rect x="0.6" y="0.6" width="30.8" height="15.8" rx="2" fill="#56698a" stroke="#34445f" stroke-width="1.2"/>
<rect x="1.90" y="2.00" width="2.45" height="2.4" fill="#eef3fa"/><rect x="5.15" y="2.00" width="2.45" height="2.4" fill="#eef3fa"/><rect x="8.40" y="2.00" width="2.45" height="2.4" fill="#eef3fa"/><rect x="11.65" y="2.00" width="2.45" height="2.4" fill="#eef3fa"/><rect x="14.90" y="2.00" width="2.45" height="2.4" fill="#eef3fa"/><rect x="18.15" y="2.00" width="2.45" height="2.4" fill="#eef3fa"/><rect x="21.40" y="2.00" width="2.45" height="2.4" fill="#eef3fa"/><rect x="24.65" y="2.00" width="2.45" height="2.4" fill="#eef3fa"/><rect x="27.90" y="2.00" width="2.45" height="2.4" fill="#eef3fa"/><rect x="1.90" y="5.20" width="2.45" height="2.4" fill="#eef3fa"/><rect x="5.15" y="5.20" width="2.45" height="2.4" fill="#eef3fa"/><rect x="8.40" y="5.20" width="2.45" height="2.4" fill="#eef3fa"/><rect x="11.65" y="5.20" width="2.45" height="2.4" fill="#eef3fa"/><rect x="14.90" y="5.20" width="2.45" height="2.4" fill="#eef3fa"/><rect x="18.15" y="5.20" width="2.45" height="2.4" fill="#eef3fa"/><rect x="21.40" y="5.20" width="2.45" height="2.4" fill="#eef3fa"/><rect x="24.65" y="5.20" width="2.45" height="2.4" fill="#eef3fa"/><rect x="27.90" y="5.20" width="2.45" height="2.4" fill="#eef3fa"/><rect x="1.90" y="8.40" width="2.45" height="2.4" fill="#eef3fa"/><rect x="5.15" y="8.40" width="2.45" height="2.4" fill="#eef3fa"/><rect x="8.40" y="8.40" width="2.45" height="2.4" fill="#eef3fa"/><rect x="11.65" y="8.40" width="2.45" height="2.4" fill="#eef3fa"/><rect x="14.90" y="8.40" width="2.45" height="2.4" fill="#eef3fa"/><rect x="18.15" y="8.40" width="2.45" height="2.4" fill="#eef3fa"/><rect x="21.40" y="8.40" width="2.45" height="2.4" fill="#eef3fa"/><rect x="24.65" y="8.40" width="2.45" height="2.4" fill="#eef3fa"/><rect x="27.90" y="8.40" width="2.45" height="2.4" fill="#eef3fa"/><rect x="1.90" y="11.60" width="2.45" height="2.4" fill="#eef3fa"/><rect x="5.15" y="11.60" width="2.45" height="2.4" fill="#eef3fa"/><rect x="8.40" y="11.60" width="18.70" height="2.4" fill="#eef3fa"/><rect x="24.65" y="11.60" width="2.45" height="2.4" fill="#eef3fa"/><rect x="27.90" y="11.60" width="2.45" height="2.4" fill="#eef3fa"/>
</svg>
<div class="a" style="left:6px;top:639px;width:1013px;height:1px;background:#b8b8b8"></div>
<!-- buttons -->
<div class="btn" style="left:3px;top:647px"></div>
<div class="btn" style="left:173px;top:647px"></div>
<div class="btn" style="left:343px;top:647px"></div>
<div class="btn" style="left:513px;top:647px"></div>
<div class="btn" style="left:683px;top:647px"></div>
<div class="btn" style="left:853px;top:647px;width:170px"></div>
<div class="btn be" style="left:3px;top:689px"><div class="bt">F7 Stampa</div></div>
<div class="btn be" style="left:173px;top:689px"><div class="bt">F8 Pagina</div></div>
<div class="btn be" style="left:343px;top:689px"><div class="bt" style="font-size:14.8px">F9 Manutenzioni</div>
<div class="a" style="right:1px;top:1px;width:0;height:0;border-top:8px solid #14145a;border-left:8px solid transparent"></div></div>
<div class="btn" style="left:513px;top:689px"></div>
<div class="btn be" style="left:683px;top:689px"><div class="bt" style="padding-left:33px;font-size:14.8px">F11 Help</div>
<svg class="a" style="left:37px;top:2.5px" width="30" height="30" viewBox="0 0 30 30">
<path d="M15 0.6 L29.4 15 L15 29.4 L0.6 15 Z" fill="#e9eff6" stroke="#4d6e90" stroke-width="1.2"/>
<path d="M15 3.6 L26.4 15 L15 26.4 L3.6 15 Z" fill="#6f94bc"/>
<circle cx="14.8" cy="9.6" r="2.5" fill="#eef4fa"/>
<rect x="13" y="13.2" width="3.8" height="8" fill="#eef4fa"/>
<rect x="11.8" y="13.2" width="2" height="1.6" fill="#eef4fa"/>
<rect x="11.6" y="20" width="6.6" height="2" fill="#eef4fa"/>
</svg></div>
<div class="btn be" style="left:853px;top:689px;width:170px"><div class="bt" style="padding-left:32px">F12 Esci</div>
<svg class="a" style="left:39px;top:3px" width="31" height="32" viewBox="0 0 31 32">
<defs><linearGradient id="eg" x1="0" y1="0" x2="1" y2="0"><stop offset="0" stop-color="#8ad8f2"/><stop offset="1" stop-color="#45bde6"/></linearGradient></defs>
<path d="M0.6 0.6 H16.4 V5.4 H7.8 V25.6 H16.4 V30.4 H0.6 Z" fill="url(#eg)" stroke="#33a7d2" stroke-width="1.1"/>
<path d="M11 11.2 H19.5 V6.8 L29.6 15 L19.5 23.2 V18.4 H11 Z" fill="url(#eg)" stroke="#33a7d2" stroke-width="1.1"/>
</svg></div>
</div>
</body></html>
